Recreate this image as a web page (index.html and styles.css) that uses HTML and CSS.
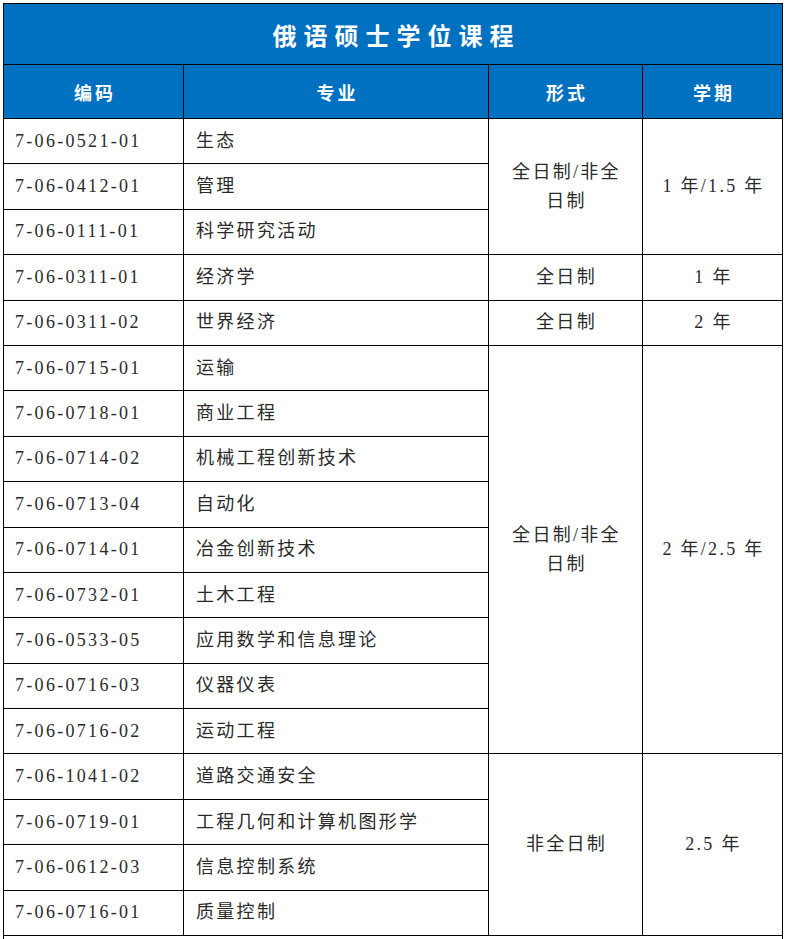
FILE: index.html
```html
<!DOCTYPE html>
<html lang="zh-CN">
<head>
<meta charset="utf-8">
<title>俄语硕士学位课程</title>
<link rel="stylesheet" href="styles.css">
</head>
<body>
<table class="courses">
  <colgroup>
    <col class="c-code">
    <col class="c-major">
    <col class="c-form">
    <col class="c-term">
  </colgroup>
  <thead>
    <tr class="title-row"><th colspan="4" class="title">俄语硕士学位课程</th></tr>
    <tr class="head-row">
      <th>编码</th>
      <th>专业</th>
      <th>形式</th>
      <th>学期</th>
    </tr>
  </thead>
  <tbody>
    <tr><td class="code">7-06-0521-01</td><td class="major">生态</td><td class="mid" rowspan="3">全日制/非全日制</td><td class="mid" rowspan="3">1 年/1.5 年</td></tr>
    <tr><td class="code">7-06-0412-01</td><td class="major">管理</td></tr>
    <tr><td class="code">7-06-0111-01</td><td class="major">科学研究活动</td></tr>
    <tr><td class="code">7-06-0311-01</td><td class="major">经济学</td><td class="mid">全日制</td><td class="mid">1 年</td></tr>
    <tr><td class="code">7-06-0311-02</td><td class="major">世界经济</td><td class="mid">全日制</td><td class="mid">2 年</td></tr>
    <tr><td class="code">7-06-0715-01</td><td class="major">运输</td><td class="mid" rowspan="9">全日制/非全日制</td><td class="mid" rowspan="9">2 年/2.5 年</td></tr>
    <tr><td class="code">7-06-0718-01</td><td class="major">商业工程</td></tr>
    <tr><td class="code">7-06-0714-02</td><td class="major">机械工程创新技术</td></tr>
    <tr><td class="code">7-06-0713-04</td><td class="major">自动化</td></tr>
    <tr><td class="code">7-06-0714-01</td><td class="major">冶金创新技术</td></tr>
    <tr><td class="code">7-06-0732-01</td><td class="major">土木工程</td></tr>
    <tr><td class="code">7-06-0533-05</td><td class="major">应用数学和信息理论</td></tr>
    <tr><td class="code">7-06-0716-03</td><td class="major">仪器仪表</td></tr>
    <tr><td class="code">7-06-0716-02</td><td class="major">运动工程</td></tr>
    <tr><td class="code">7-06-1041-02</td><td class="major">道路交通安全</td><td class="mid" rowspan="4">非全日制</td><td class="mid" rowspan="4">2.5 年</td></tr>
    <tr><td class="code">7-06-0719-01</td><td class="major">工程几何和计算机图形学</td></tr>
    <tr><td class="code">7-06-0612-03</td><td class="major">信息控制系统</td></tr>
    <tr><td class="code">7-06-0716-01</td><td class="major">质量控制</td></tr>
    <tr class="note-row"><td colspan="4"></td></tr>
  </tbody>
</table>
</body>
</html>
```

FILE: styles.css
```css
html, body {
  margin: 0;
  padding: 0;
  background: #ffffff;
}

body {
  padding: 3px 0 0 3px;
}

.courses {
  border-collapse: collapse;
  table-layout: fixed;
  width: 780px;
  font-family: "Liberation Serif", "Noto Sans CJK SC", serif;
  color: #2a2a2a;
}

.c-code { width: 180px; }
.c-major { width: 305px; }
.c-form { width: 154px; }
.c-term { width: 140px; }

.courses th,
.courses td {
  border: 1px solid #000;
  padding: 0;
}

.title-row { height: 61px; }

.courses .title {
  background: #0070c0;
  color: #ffffff;
  font-family: "Noto Sans CJK SC", sans-serif;
  font-weight: 700;
  font-size: 24px;
  letter-spacing: 7px;
  padding-left: 7px;
  text-align: center;
}

.head-row { height: 54px; }

.courses .head-row th {
  background: #0070c0;
  color: #ffffff;
  font-family: "Noto Sans CJK SC", sans-serif;
  font-weight: 700;
  font-size: 18px;
  letter-spacing: 3px;
  padding-left: 3px;
  text-align: center;
}

.courses tbody tr { height: 45.4px; }

.courses td {
  font-size: 18px;
  letter-spacing: 2.3px;
  line-height: 29px;
  font-weight: 400;
}

.courses td.code { padding-left: 11px; }
.courses td.major { padding-left: 12px; }

.courses td.mid {
  text-align: center;
  padding: 0 16px 0 18px;
}

.courses tbody tr.note-row { height: 40px; }
.courses .note-row td { border-bottom: none; }
```
